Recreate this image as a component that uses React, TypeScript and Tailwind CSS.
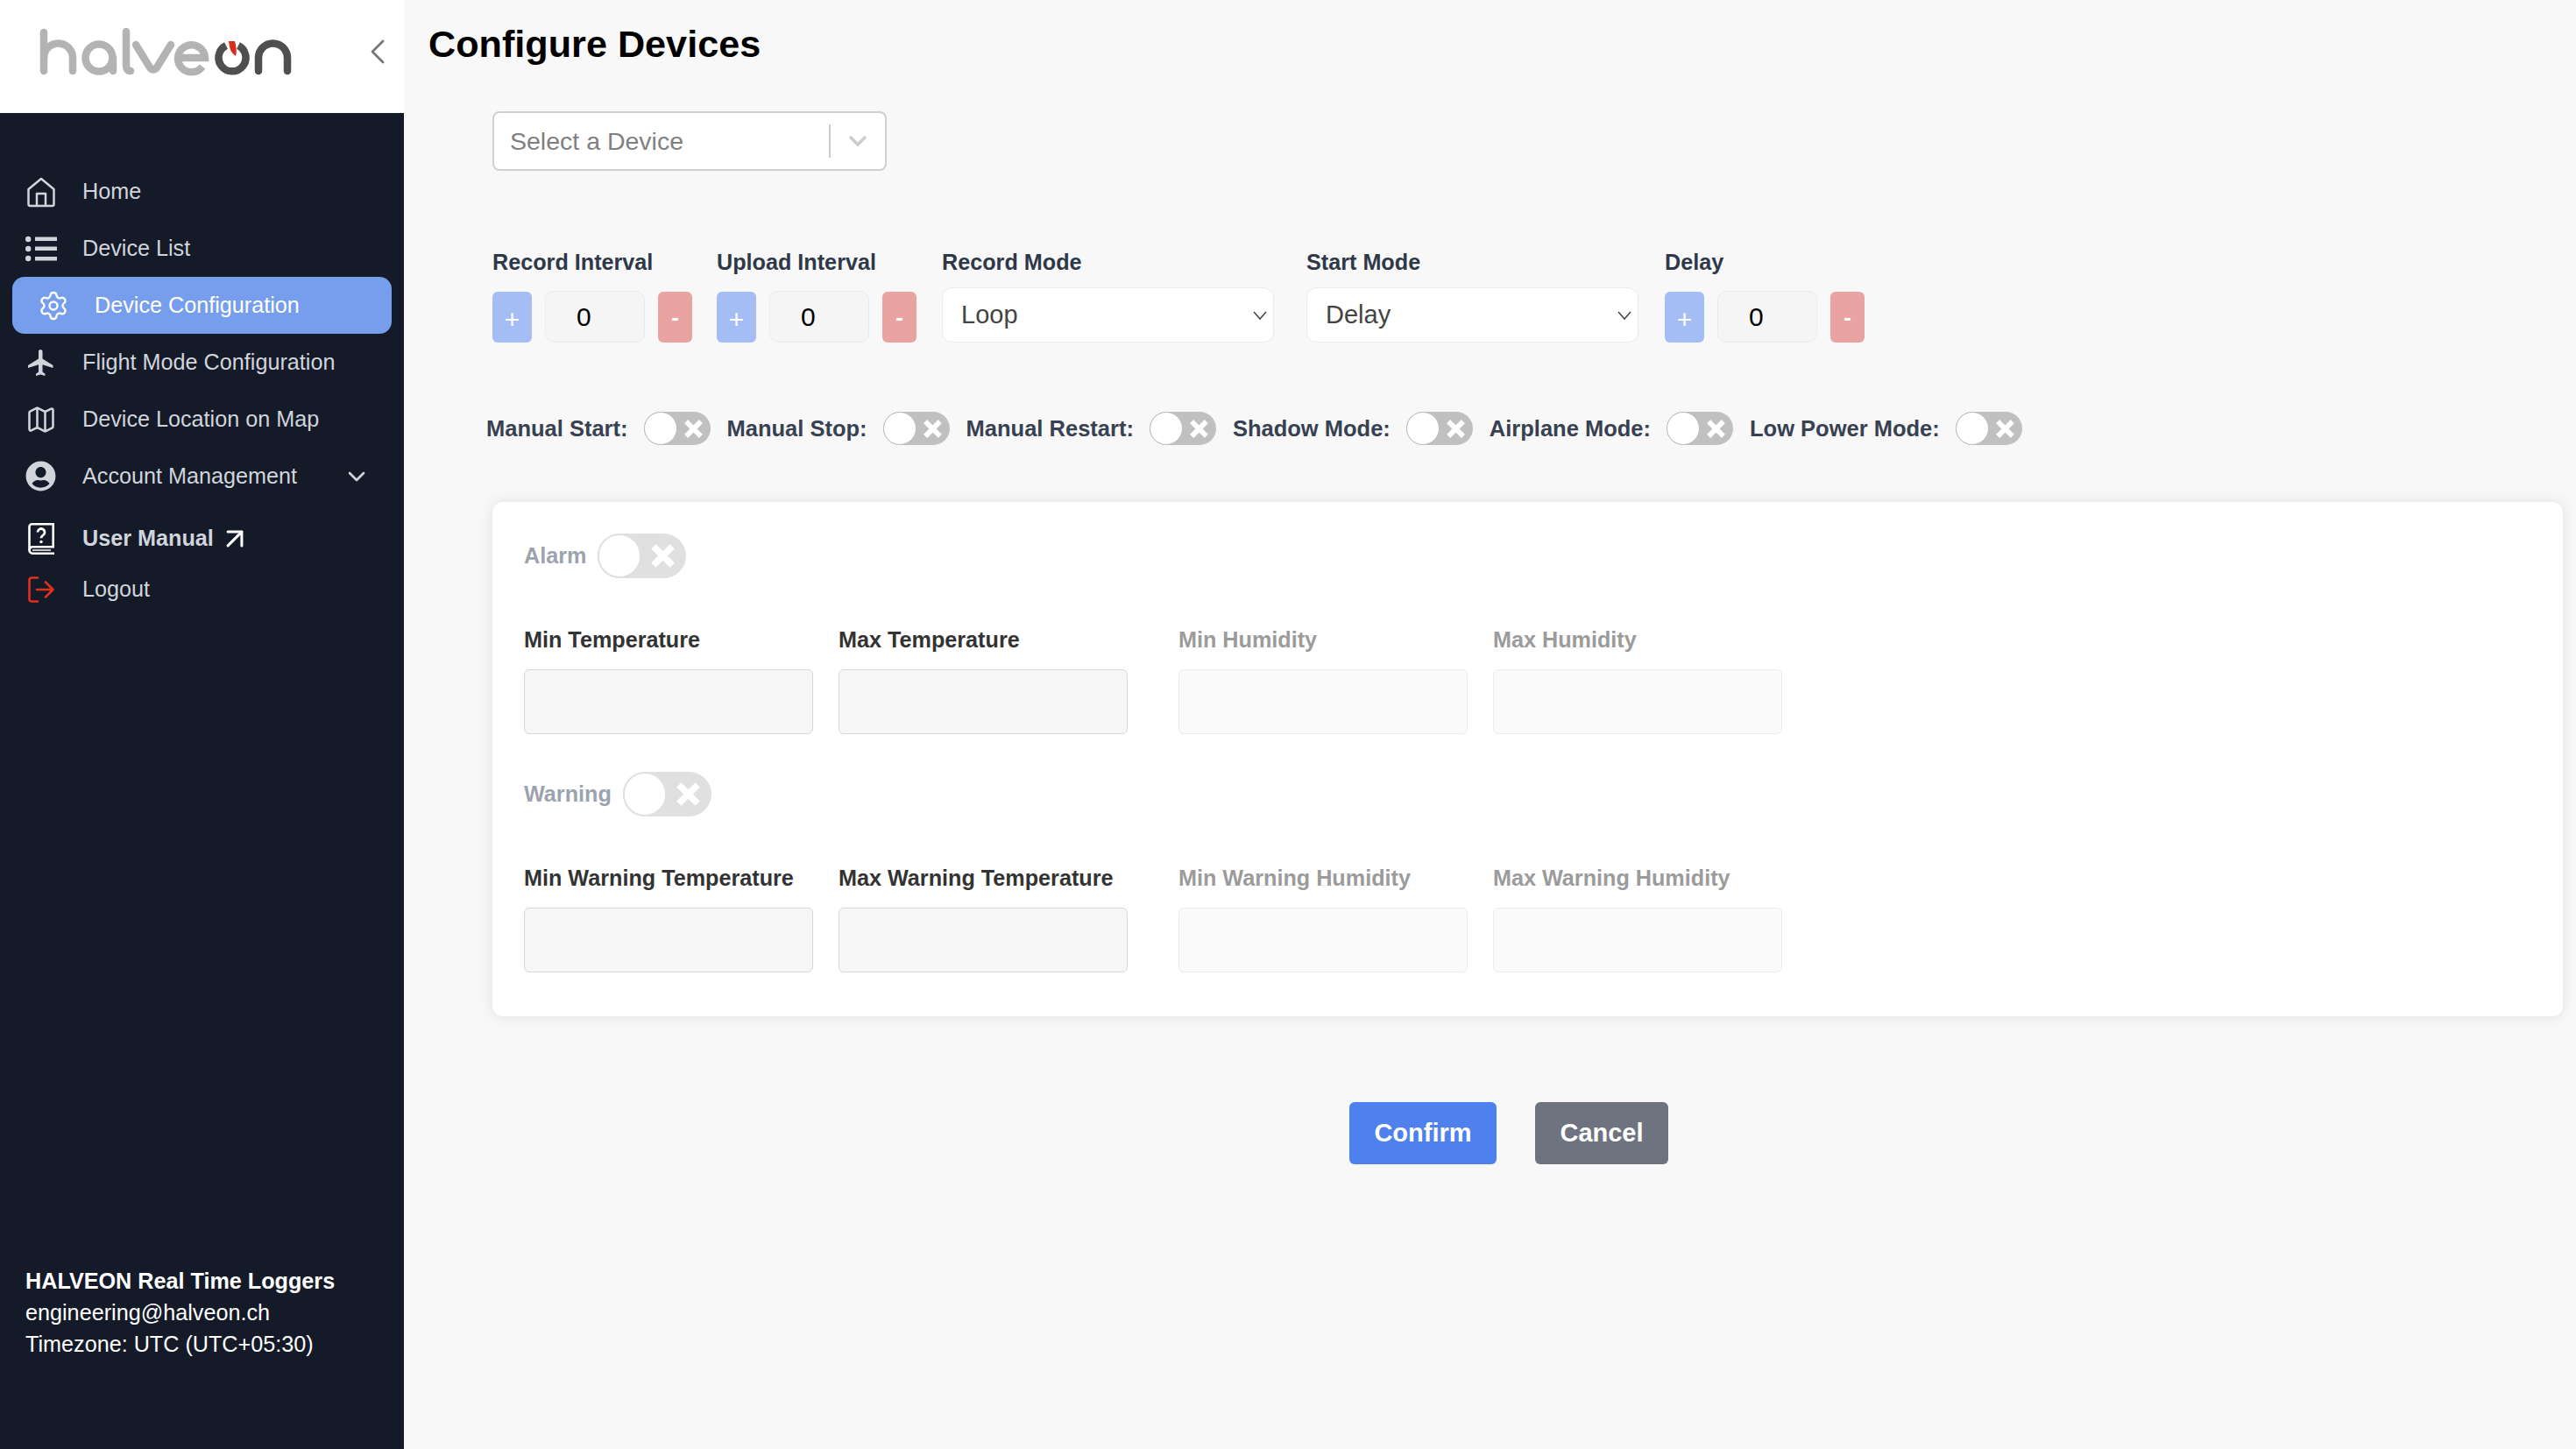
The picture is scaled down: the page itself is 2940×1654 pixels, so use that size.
import { ArrowUpRight, ChevronDown, ChevronLeft, Map, Settings } from "lucide-react";
import { FaUserCircle } from "react-icons/fa";
import { MdFlight } from "react-icons/md";

function Logo() {
  return (
    <svg width="300" height="64" viewBox="40 28 300 64" fill="none" strokeWidth="8.5">
      <g stroke="#b3b3b3">
        <path d="M50 37V81" strokeLinecap="round" />
        <path d="M50 66a16.5 16.5 0 0 1 33 0V81" strokeLinecap="round" />
        <circle cx="113" cy="66" r="15.5" />
        <path d="M129 66V81" strokeLinecap="round" />
        <path d="M144 36V73Q144 81 149 81" strokeLinecap="round" />
        <path d="M155 51L171 77Q175 82 179 77L195 51" strokeLinecap="round" />
        <path d="M204 66H234A15.5 15.5 0 1 0 231 76" />
      </g>
      <g stroke="#4f4f4f">
        <path d="M258 52A15.5 15.5 0 1 0 272 52" />
        <path d="M295 81V66a16.5 16.5 0 0 1 33 0V81" strokeLinecap="round" />
      </g>
      <path d="M261 47L268 47Q271 58 269 64Q262 60 261 47Z" fill="#db2b1c" />
    </svg>
  );
}

function HomeIcon() {
  return (
    <svg width="36" height="36" viewBox="0 0 36 36" fill="none" stroke="#d1d5db" strokeWidth="2.5" strokeLinejoin="round">
      <path d="M3.5 15L18 3l14.5 12v17a2 2 0 0 1-2 2h-25a2 2 0 0 1-2-2z" />
      <path d="M13 34V20h10v14" />
    </svg>
  );
}

function ListIcon() {
  return (
    <svg width="36" height="30" viewBox="0 0 36 30" fill="#d1d5db">
      <circle cx="3.2" cy="4" r="3.2" />
      <circle cx="3.2" cy="15" r="3.2" />
      <circle cx="3.2" cy="26" r="3.2" />
      <rect x="11" y="1.5" width="25" height="4.5" />
      <rect x="11" y="12.5" width="25" height="4.5" />
      <rect x="11" y="24" width="25" height="4.5" />
    </svg>
  );
}

function ManualIcon() {
  return (
    <svg width="30" height="36" viewBox="0 0 30 36" fill="none" stroke="#ffffff" strokeWidth="2.6">
      <path d="M30 1.3H4.5a3 3 0 0 0-3 3V31a3.7 3.7 0 0 0 3.7 3.7H30" />
      <path d="M1.5 31a3.7 3.7 0 0 1 3.7-3.7H28.7V1.3" />
      <path d="M5 31H26" strokeWidth="1.5" />
      <path d="M11 10.5a4 4 0 1 1 6.2 3.4c-1.5 1-2.2 1.7-2.2 3.4" strokeWidth="2.8" />
      <circle cx="15" cy="21.5" r="1.7" fill="#ffffff" stroke="none" />
    </svg>
  );
}

function LogoutIcon() {
  return (
    <svg width="30" height="30" viewBox="0 0 30 30" fill="none" stroke="#e0301e" strokeWidth="2.6" strokeLinecap="round" strokeLinejoin="round">
      <path d="M11 1.5H4a2.5 2.5 0 0 0-2.5 2.5v22A2.5 2.5 0 0 0 4 28.500h7" />
      <path d="M10 15H28.500M20 6.500l8.500 8.500-8.500 8.500" />
    </svg>
  );
}

function NavRow({ icon, label }: { icon: React.ReactNode; label: string }) {
  return (
    <div className="flex h-[65px] items-center pl-[29px] text-[25.200px] text-[#d1d5db]">
      <span className="flex w-[36px] justify-center">{icon}</span>
      <span className="ml-[29px]">{label}</span>
    </div>
  );
}

function Sidebar() {
  return (
    <aside className="flex w-[461px] shrink-0 flex-col bg-[#141a28]">
      <div className="flex h-[129px] items-start justify-between bg-white pl-[40px] pr-[6px] pt-[28px]">
        <Logo />
        <ChevronLeft className="mt-[7px] h-[48px] w-[48px] text-[#777777]" strokeWidth={1.4} />
      </div>
      <nav className="flex flex-col pt-[57px]">
        <NavRow icon={<HomeIcon />} label="Home" />
        <NavRow icon={<ListIcon />} label="Device List" />
        <div className="mx-[14px] flex h-[65px] items-center rounded-[14px] bg-[#769eec] pl-[29px] text-[25.200px] text-white">
          <span className="flex w-[36px] justify-center">
            <Settings className="h-[38px] w-[38px]" strokeWidth={1.6} />
          </span>
          <span className="ml-[29px]">Device Configuration</span>
        </div>
        <NavRow icon={<MdFlight className="h-[36px] w-[36px]" />} label="Flight Mode Configuration" />
        <NavRow icon={<Map className="h-[36px] w-[36px]" strokeWidth={1.7} />} label="Device Location on Map" />
        <div className="flex h-[65px] items-center pl-[29px] pr-[38px] text-[25.200px] text-[#d1d5db]">
          <FaUserCircle className="h-[35px] w-[35px]" />
          <span className="ml-[30px]">Account Management</span>
          <ChevronDown className="ml-auto h-[32px] w-[32px]" strokeWidth={2} />
        </div>
        <div className="mt-[6px] flex h-[65px] items-center pl-[32px] text-[25.200px] font-bold text-[#d1d5db]">
          <ManualIcon />
          <span className="ml-[32px]">User Manual</span>
          <ArrowUpRight className="ml-[5px] h-[38px] w-[38px] text-white" strokeWidth={1.9} />
        </div>
        <div className="-mt-[7px] flex h-[65px] items-center pl-[32px] text-[25.200px] text-[#d1d5db]">
          <LogoutIcon />
          <span className="ml-[32px]">Logout</span>
        </div>
      </nav>
      <div className="mt-auto pb-[102px] pl-[29px] text-[25.200px] leading-[36px] text-white">
        <div className="font-bold">HALVEON Real Time Loggers</div>
        <div>engineering@halveon.ch</div>
        <div>Timezone: UTC (UTC+05:30)</div>
      </div>
    </aside>
  );
}

function Stepper() {
  return (
    <div className="flex items-end">
      <div className="flex h-[58px] w-[45px] items-center justify-center rounded-[6px] bg-[#a4bdf4] pt-[4px] text-[30px] text-white">+</div>
      <div className="ml-[15px] flex h-[59px] w-[114px] items-center rounded-[10px] border border-[#ebebeb] bg-[#f5f5f5] pl-[35px] text-[30px] text-black">0</div>
      <div className="ml-[15px] flex h-[58px] w-[39px] items-center justify-center rounded-[6px] bg-[#e9a3a3] text-[26px] font-bold text-white">-</div>
    </div>
  );
}

function ModeSelect({ value }: { value: string }) {
  return (
    <div className="flex h-[63px] w-[379px] items-center justify-between rounded-[12px] border border-[#ececec] bg-white pl-[21px] pr-[6px] text-[29px] text-[#444444]">
      {value}
      <svg width="18" height="12" viewBox="0 0 18 12" fill="none" stroke="#444444" strokeWidth="1.5">
        <path d="M2 2l7 8 7-8" />
      </svg>
    </div>
  );
}

function Labeled({ label, className, children }: { label: string; className: string; children: React.ReactNode }) {
  return (
    <div className={className}>
      <div className="flex h-[40px] items-center whitespace-nowrap pt-[2px] text-[25.200px] font-bold text-[#2f3848]">{label}</div>
      <div className="mt-[9px] flex h-[63px] items-end">{children}</div>
    </div>
  );
}

function XMark({ size, color }: { size: number; color: string }) {
  return (
    <svg width={size} height={size} viewBox="0 0 20 20" stroke={color} strokeWidth="5.500" strokeLinecap="square">
      <path d="M4 4l12 12M16 4L4 16" />
    </svg>
  );
}

function SmallToggle({ label }: { label: string }) {
  return (
    <div className="flex items-center">
      <span className="whitespace-nowrap text-[25.500px] font-bold text-[#374151]">{label}</span>
      <span className="ml-[18px] flex h-[38px] w-[76px] items-center justify-between rounded-full bg-[#c0c0c0] pr-[9px]">
        <span className="h-[38px] w-[38px] rounded-full border border-[#bdbdbd] bg-white" />
        <XMark size={21} color="#ffffff" />
      </span>
    </div>
  );
}

function BigToggle({ label }: { label: string }) {
  return (
    <div className="flex h-[51px] items-center">
      <span className="mr-[13px] text-[25.200px] font-bold text-[#9ca3af]">{label}</span>
      <span className="flex h-[51px] w-[101px] items-center justify-between rounded-full bg-[#e0e0e0] pr-[13px]">
        <span className="h-[51px] w-[50px] rounded-full border-2 border-[#e0e0e0] bg-white" />
        <XMark size={27} color="#ffffff" />
      </span>
    </div>
  );
}

function Field({ label, dim, className }: { label: string; dim?: boolean; className?: string }) {
  return (
    <div className={className}>
      <div className={`flex h-[40px] items-center whitespace-nowrap pt-[2px] text-[25.200px] font-bold ${dim ? "text-[#9b9b9b]" : "text-[#333333]"}`}>
        {label}
      </div>
      <div
        className={`mt-[14px] h-[74px] w-[330px] rounded-[6px] border ${dim ? "border-[#ececec] bg-[#fafafa]" : "border-[#d8d8d8] bg-[#f6f6f6]"}`}
      />
    </div>
  );
}

export default function App() {
  return (
    <div className="flex min-h-screen bg-[#f8f8f8] font-['Liberation_Sans',Arial,sans-serif]">
      <Sidebar />
      <main className="min-w-0 flex-1 pl-[28px] pr-[15px] pt-[20px]">
        <h1 className="h-[60px] text-[43.200px] font-bold leading-[60px] text-black">Configure Devices</h1>

        <div className="ml-[73px] mt-[47px] flex h-[68px] w-[450px] items-center rounded-[8px] border-2 border-[#d0d0d0] bg-white pl-[18px] text-[28.500px] text-[#808080]">
          Select a Device
          <span className="ml-auto h-[38px] w-[2px] bg-[#cccccc]" />
          <svg className="ml-[20px] mr-[20px]" width="22" height="14" viewBox="0 0 22 14" fill="none" stroke="#cccccc" strokeWidth="3.500">
            <path d="M2 2l9 9 9-9" />
          </svg>
        </div>

        <div className="ml-[73px] mt-[84px] flex">
          <Labeled label="Record Interval" className="w-[228px]"><Stepper /></Labeled>
          <Labeled label="Upload Interval" className="ml-[28px] w-[228px]"><Stepper /></Labeled>
          <Labeled label="Record Mode" className="ml-[29px]"><ModeSelect value="Loop" /></Labeled>
          <Labeled label="Start Mode" className="ml-[37px]"><ModeSelect value="Delay" /></Labeled>
          <Labeled label="Delay" className="ml-[30px]"><Stepper /></Labeled>
        </div>

        <div className="ml-[66px] mt-[79px] flex h-[38px] gap-[19px]">
          <SmallToggle label="Manual Start:" />
          <SmallToggle label="Manual Stop:" />
          <SmallToggle label="Manual Restart:" />
          <SmallToggle label="Shadow Mode:" />
          <SmallToggle label="Airplane Mode:" />
          <SmallToggle label="Low Power Mode:" />
        </div>

        <section className="ml-[73px] mt-[65px] h-[587px] rounded-[12px] bg-white pl-[36px] pt-[36px] shadow-[0_0_16px_rgba(0,0,0,0.1)]">
          <BigToggle label="Alarm" />
          <div className="mt-[50px] flex">
            <Field label="Min Temperature" />
            <Field label="Max Temperature" className="ml-[29px]" />
            <Field label="Min Humidity" dim className="ml-[58px]" />
            <Field label="Max Humidity" dim className="ml-[29px]" />
          </div>
          <div className="mt-[43px]">
            <BigToggle label="Warning" />
          </div>
          <div className="mt-[50px] flex">
            <Field label="Min Warning Temperature" />
            <Field label="Max Warning Temperature" className="ml-[29px]" />
            <Field label="Min Warning Humidity" dim className="ml-[58px]" />
            <Field label="Max Warning Humidity" dim className="ml-[29px]" />
          </div>
        </section>

        <div className="ml-[1051px] mt-[98px] flex gap-[44px] text-[29px] font-bold text-white">
          <div className="flex h-[71px] w-[168px] items-center justify-center rounded-[6px] bg-[#4f81ee]">Confirm</div>
          <div className="flex h-[71px] w-[152px] items-center justify-center rounded-[6px] bg-[#6f7380]">Cancel</div>
        </div>
      </main>
    </div>
  );
}
